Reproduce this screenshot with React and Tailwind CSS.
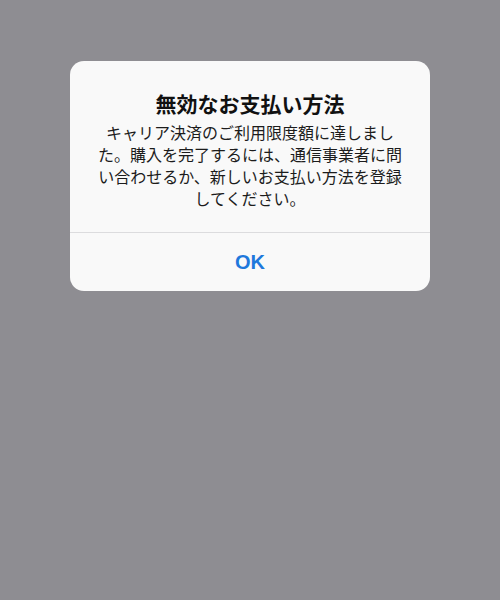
export default function App() {
  return (
    <div
      className="flex h-[600px] w-[500px] flex-col items-center bg-[#8e8d92] pt-[61px]"
      style={{ fontFamily: '"Noto Sans CJK JP", "Noto Sans", sans-serif' }}
    >
      <div className="w-[360px] overflow-hidden rounded-[14px] bg-[#f9f9f9]">
        <div className="flex flex-col items-center px-5 pt-[28px] pb-[23px] text-center">
          <h1 className="text-[21px] font-bold leading-[28px] text-[#111]">
            無効なお支払い方法
          </h1>
          <p className="mt-1 text-[16px] leading-[22px] text-[#1c1c1c]">
            キャリア決済のご利用限度額に達しまし
            <br />
            た。購入を完了するには、通信事業者に問
            <br />
            い合わせるか、新しいお支払い方法を登録
            <br />
            してください。
          </p>
        </div>
        <div className="border-t border-[#dcdcde]">
          <button
            className="flex h-[58px] w-full items-center justify-center text-[20px] font-bold text-[#1f78dc]"
            style={{ fontFamily: '"Liberation Sans", Arial, sans-serif' }}
          >
            OK
          </button>
        </div>
      </div>
    </div>
  );
}
